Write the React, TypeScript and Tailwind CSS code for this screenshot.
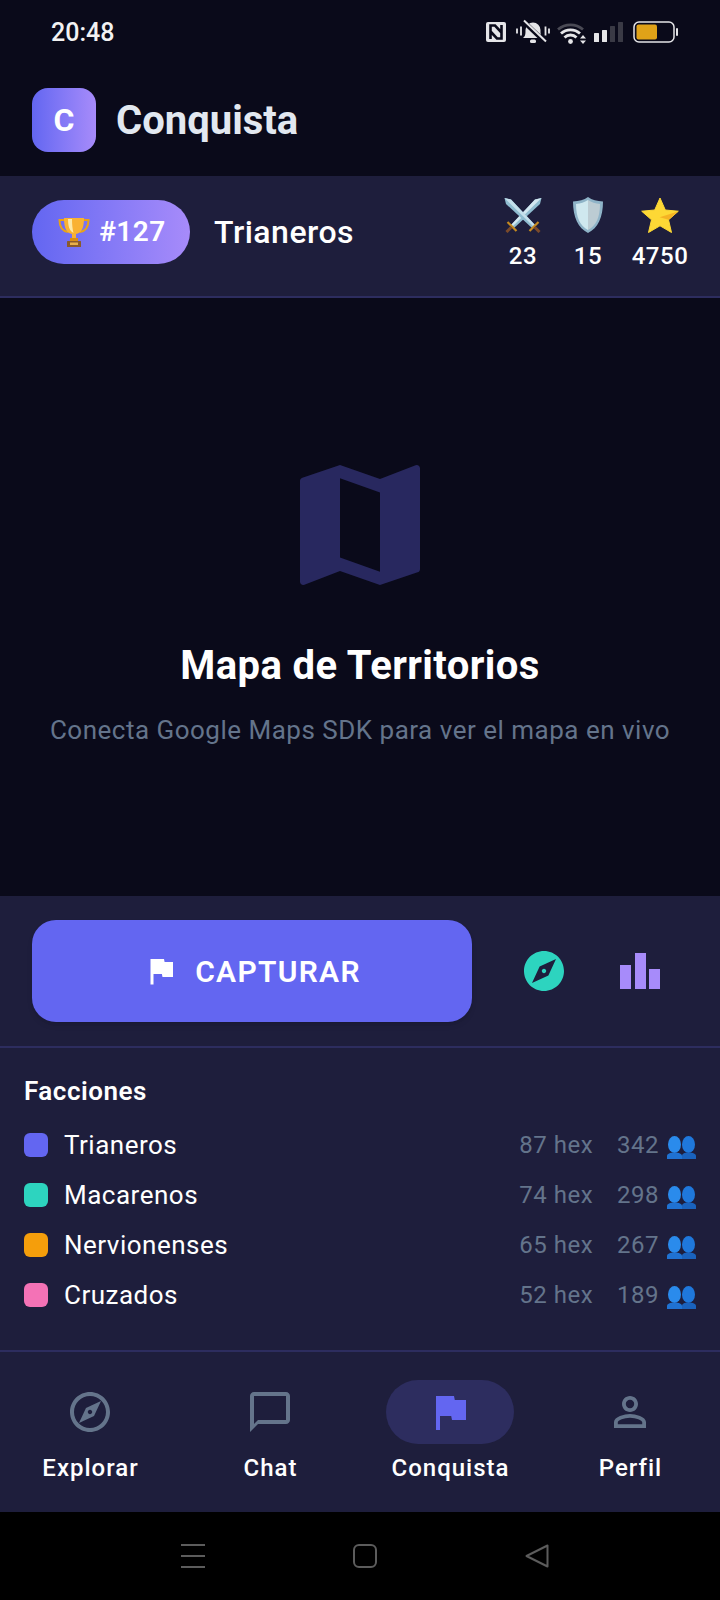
import { MdChatBubbleOutline, MdExplore, MdFlag, MdMap, MdOutlineExplore, MdPersonOutline } from "react-icons/md";

const factions = [
    { name: "Trianeros", color: "bg-[#6366f1]", hex: "87 hex", people: "342" },
    { name: "Macarenos", color: "bg-[#2dd4bf]", hex: "74 hex", people: "298" },
    { name: "Nervionenses", color: "bg-[#f59e0b]", hex: "65 hex", people: "267" },
    { name: "Cruzados", color: "bg-[#f472b6]", hex: "52 hex", people: "189" },
];

function StatusIcons() {
    return (
        <svg width="200" height="28" viewBox="0 0 200 28" className="block">
            {/* nfc */}
            <rect x="6" y="4" width="20" height="20" rx="2" fill="#e5e5e8" />
            <path d="M10.500 21V7.500h4.500l6.500 7M21.500 7v13.500H17l-6.500-7" stroke="#0a0a1a" strokeWidth="2.600" fill="none" />
            {/* bell off */}
            <path d="M43 20c2.500-2 2.500-4 2.500-8a7.500 7.500 0 0 1 15 0c0 4 0 6 3 8z" fill="#e5e5e8" />
            <rect x="50" y="21.500" width="6" height="3.500" rx="1.500" fill="#e5e5e8" />
            <path d="M43 3l22 21" stroke="#0a0a1a" strokeWidth="4.500" />
            <path d="M44 2.500l22 21" stroke="#e5e5e8" strokeWidth="2" />
            <path d="M37 10.500v5M41 8.500v9M65.500 8.500v9M69 10.500v5" stroke="#e5e5e8" strokeWidth="1.800" />
            {/* wifi */}
            <path d="M78 11.500a19 19 0 0 1 25 0" stroke="#4a4a55" strokeWidth="2.800" fill="none" />
            <path d="M81 15.500a14 14 0 0 1 19 0M84.500 19.500a8.500 8.500 0 0 1 12 0" stroke="#e5e5e8" strokeWidth="2.800" fill="none" />
            <circle cx="90.500" cy="23.500" r="2.400" fill="#e5e5e8" />
            <path d="M103 17l3 3.400h-6zM103 26l3-3.400h-6z" fill="#e5e5e8" />
            {/* signal */}
            <rect x="114" y="15" width="5" height="9" rx="0.500" fill="#e5e5e8" />
            <rect x="122" y="12" width="5" height="12" rx="0.500" fill="#e5e5e8" />
            <rect x="130" y="8" width="5" height="16" rx="0.500" fill="#3a3a45" />
            <rect x="138" y="4" width="5" height="20" rx="0.500" fill="#3a3a45" />
            {/* battery */}
            <rect x="154" y="4" width="40" height="20" rx="5" fill="none" stroke="#e5e5e8" strokeWidth="1.500" />
            <rect x="156.500" y="6.500" width="20.500" height="15" rx="2" fill="#e0a218" />
            <rect x="196" y="10" width="2" height="8" rx="1" fill="#e5e5e8" />
        </svg>
    );
}

function Trophy() {
    return (
        <svg width="36" height="32" viewBox="0 0 36 32" className="block">
            <path d="M9 4H3.500c0 7 3 11 8.500 12M27 4h5.500c0 7-3 11-8.500 12" stroke="#e8a317" strokeWidth="2" fill="none" />
            <path d="M8 2h20c0 11-3 15-8 16v5h-4v-5C11 17 8 13 8 2z" fill="#f9b233" />
            <path d="M12 3h4c0 6 .5 10 1.500 14C13.500 15 12 10 12 3z" fill="#fde9a8" />
            <rect x="14" y="22" width="8" height="3" fill="#d98e14" />
            <rect x="11" y="25" width="14" height="6" rx="0.500" fill="#8a5a2b" />
            <rect x="14" y="26.500" width="8" height="2.500" fill="#e8b04a" />
        </svg>
    );
}

function Swords() {
    return (
        <svg width="40" height="36" viewBox="0 0 40 36" className="block">
            <path d="M38.500 1l-1.500 6L11 31l-3-3L32 2.500z" fill="#8fbcd0" />
            <path d="M38.500 1L9.500 29.500 8 28 32 2.500z" fill="#d3e8f1" />
            <path d="M1.500 1L8 2.500 32 28l-3 3L3 7z" fill="#8fbcd0" />
            <path d="M1.500 1L30.500 29.500 32 28 8 2.500z" fill="#c5e0ec" />
            <path d="M4.500 25l9 9M26.500 34l9-9" stroke="#c58a1f" strokeWidth="2.200" />
            <path d="M8.500 30l-5 5M31.500 30l5 5" stroke="#7a4a2a" strokeWidth="3" />
        </svg>
    );
}

function Shield() {
    return (
        <svg width="30" height="36" viewBox="0 0 30 36" className="block">
            <path d="M15 0c4 3 9 4 15 4.500C30 20 25 31 15 36 5 31 0 20 0 4.500 6 4 11 3 15 0z" fill="#8fb4c8" />
            <path d="M15 3c3.500 2.500 7.500 3.500 12 4 0 13-4 22-12 26z" fill="#bcccd3" />
            <path d="M15 3c-3.500 2.500-7.500 3.500-12 4 0 13 4 22 12 26z" fill="#cfe8ef" />
        </svg>
    );
}

function Star() {
    return (
        <svg width="38" height="36" viewBox="0 0 38 36" className="block">
            <path d="M19 1l5.300 12 13 1.200-9.800 8.600 3 12.700L19 28.800 7.500 35.500l3-12.700L.7 14.200l13-1.200z" fill="#fdd835" stroke="#fdd835" strokeLinejoin="round" />
            <path d="M37 14.500l-9.300 8.300-9-2.500 9.500-3z" fill="#f5b324" />
        </svg>
    );
}

function People() {
    return (
        <svg width="29" height="23" viewBox="0 0 29 23" className="block">
            <ellipse cx="21.500" cy="8.500" rx="6.500" ry="8.500" fill="#1f78dc" />
            <path d="M15 23v-3c0-2 2-3.500 6.500-3.500s7.500 1.500 7.500 3.500v3z" fill="#1a62bd" />
            <ellipse cx="7.500" cy="8.500" rx="6.500" ry="8.500" fill="#2a8bec" />
            <path d="M0 23v-3c0-2 3-3.500 7.500-3.500s7.500 1.500 7.500 3.500v3z" fill="#1f72d2" />
        </svg>
    );
}

function Stat({ icon, value, width }: { icon: React.ReactNode; value: string; width: string }) {
    return (
        <div className={`flex flex-col items-center ${width}`}>
            <div className="h-[36px] flex items-center justify-center">{icon}</div>
            <span className="mt-[8px] text-[24px] leading-[30px] font-medium tracking-[0.5px] text-white">{value}</span>
        </div>
    );
}

function NavItem({ icon, label, active }: { icon: React.ReactNode; label: string; active?: boolean }) {
    return (
        <div className="flex-1 flex flex-col items-center">
            <div className={`w-[128px] h-[64px] rounded-[32px] flex items-center justify-center ${active ? "bg-[#2d2d5f]" : ""}`}>
                {icon}
            </div>
            <span className="mt-[4px] pl-[1px] text-[24px] leading-[40px] font-medium tracking-[1px] text-white">{label}</span>
        </div>
    );
}

export default function App() {
    return (
        <div className="w-[720px] h-[1600px] flex flex-col bg-[#0a0a1a] text-white overflow-hidden font-['Roboto',sans-serif]">
            {/* status bar */}
            <div className="h-[64px] flex items-center justify-between pl-[51px] pr-[40px]">
                <span className="text-[25px] font-medium leading-none text-[#f2f2f2]">20:48</span>
                <StatusIcons />
            </div>

            {/* header */}
            <div className="h-[112px] flex items-center px-[32px] gap-[20px]">
                <div className="w-[64px] h-[64px] rounded-[16px] bg-gradient-to-r from-[#6366f1] to-[#a78bfa] flex items-center justify-center text-[32px] font-bold">
                    C
                </div>
                <h1 className="text-[40px] leading-[60px] font-bold text-[#e2e8f0] pt-[1px]">Conquista</h1>
            </div>

            {/* stats strip */}
            <div className="h-[122px] bg-[#1e1e3c] border-b-2 border-[#2d2d5f] flex items-start justify-between pt-[21px] px-[32px]">
                <div className="flex items-center gap-[24px] mt-[3px]">
                    <div className="w-[158px] h-[64px] rounded-[32px] bg-gradient-to-r from-[#6366f1] to-[#a78bfa] flex items-center justify-center gap-[7px]">
                        <Trophy />
                        <span className="text-[28px] font-semibold tracking-[0.5px]">#127</span>
                    </div>
                    <span className="text-[32px] font-medium tracking-[0.5px]">Trianeros</span>
                </div>
                <div className="flex items-start gap-[24px]">
                    <Stat icon={<Swords />} value="23" width="w-[42px]" />
                    <Stat icon={<Shield />} value="15" width="w-[40px]" />
                    <Stat icon={<Star />} value="4750" width="w-[56px]" />
                </div>
            </div>

            {/* map placeholder */}
            <div className="flex-1 flex flex-col items-center pt-[147px]">
                <MdMap size={160} className="text-[#28285f]" />
                <h2 className="mt-[37px] text-[40px] leading-[48px] font-bold tracking-[0.4px] text-white">Mapa de Territorios</h2>
                <p className="mt-[23px] text-[26px] leading-[34px] tracking-[0.5px] text-[#64748b]">
                    Conecta Google Maps SDK para ver el mapa en vivo
                </p>
            </div>

            {/* actions */}
            <div className="h-[152px] bg-[#1e1e3c] border-b-2 border-[#2d2d5f] flex items-start pt-[24px] pl-[32px]">
                <button className="w-[440px] h-[102px] rounded-[24px] bg-[#6366f1] shadow-md flex items-center justify-center gap-[16px]">
                    <MdFlag size={36} />
                    <span className="text-[30px] font-semibold tracking-[1.3px]">CAPTURAR</span>
                </button>
                <div className="h-[102px] flex items-center ml-[48px]">
                    <MdExplore size={48} className="text-[#2dd4bf]" />
                </div>
                <div className="h-[102px] flex items-center ml-[52px]">
                    <svg width="40" height="36" viewBox="0 0 40 36" className="block" fill="#a78bfa">
                        <rect x="0" y="12" width="11" height="24" />
                        <rect x="15" y="0" width="11" height="36" />
                        <rect x="29" y="16" width="11" height="20" />
                    </svg>
                </div>
            </div>

            {/* factions */}
            <div className="h-[304px] bg-[#1e1e3c] border-b-2 border-[#2d2d5f] pt-[25px] px-[24px]">
                <h3 className="text-[26px] leading-[36px] font-semibold tracking-[0.5px]">Facciones</h3>
                <div className="mt-[11px]">
                    {factions.map((f) => (
                        <div key={f.name} className="h-[50px] flex items-center">
                            <div className={`w-[24px] h-[24px] rounded-[6px] ${f.color}`} />
                            <span className="ml-[16px] text-[26px] tracking-[0.5px]">{f.name}</span>
                            <span className="ml-auto text-[24px] tracking-[0.5px] text-[#64748b]">{f.hex}</span>
                            <span className="ml-[24px] text-[24px] tracking-[0.5px] text-[#64748b]">{f.people}</span>
                            <span className="ml-[8px] pt-[4px]"><People /></span>
                        </div>
                    ))}
                </div>
            </div>

            {/* bottom nav */}
            <div className="h-[160px] bg-[#1e1e3c] flex pt-[28px]">
                <NavItem icon={<MdOutlineExplore size={48} className="text-[#64748b]" />} label="Explorar" />
                <NavItem icon={<MdChatBubbleOutline size={48} className="text-[#64748b]" />} label="Chat" />
                <NavItem icon={<MdFlag size={48} className="text-[#6366f1]" />} label="Conquista" active />
                <NavItem icon={<MdPersonOutline size={48} className="text-[#64748b]" />} label="Perfil" />
            </div>

            {/* android nav */}
            <div className="h-[88px] bg-black flex items-center pl-[181px] gap-[148px]">
                <svg width="24" height="24" viewBox="0 0 24 24" className="block" stroke="#5c5c5c" strokeWidth="2">
                    <path d="M0 1h24M0 12h24M0 23h24" />
                </svg>
                <svg width="24" height="24" viewBox="0 0 24 24" className="block" fill="none" stroke="#5c5c5c" strokeWidth="2">
                    <rect x="1" y="1" width="22" height="22" rx="5" />
                </svg>
                <svg width="24" height="24" viewBox="0 0 24 24" className="block" fill="none" stroke="#5c5c5c" strokeWidth="2" strokeLinejoin="round">
                    <path d="M22.500 1.500v21L1.500 12z" />
                </svg>
            </div>
        </div>
    );
}
